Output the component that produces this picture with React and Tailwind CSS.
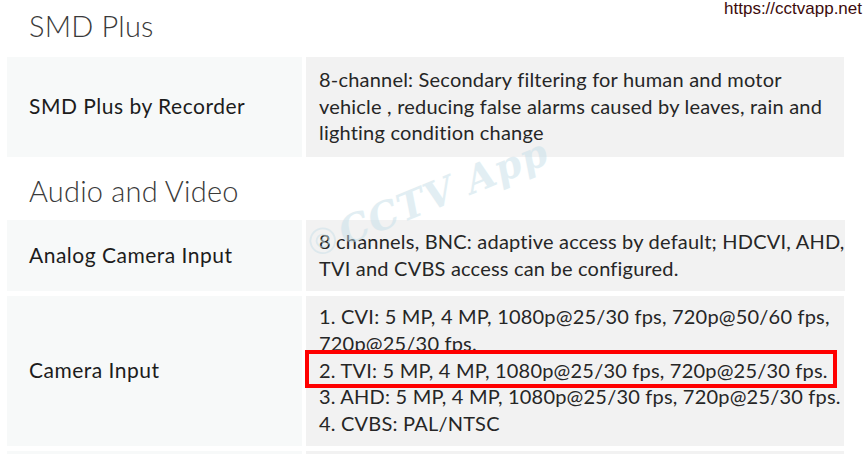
import React from 'react';

const specs = [
  {
    title: 'SMD Plus',
    rows: [
      {
        label: 'SMD Plus by Recorder',
        height: 'h-[100px]',
        lines: [
          '8-channel: Secondary filtering for human and motor',
          'vehicle , reducing false alarms caused by leaves, rain and',
          'lighting condition change',
        ],
      },
    ],
  },
  {
    title: 'Audio and Video',
    rows: [
      {
        label: 'Analog Camera Input',
        height: 'h-[71px]',
        lines: [
          '8 channels, BNC: adaptive access by default; HDCVI, AHD,',
          'TVI and CVBS access can be configured.',
        ],
      },
      {
        label: 'Camera Input',
        height: 'h-[150px]',
        lines: [
          '1. CVI: 5 MP, 4 MP, 1080p@25/30 fps, 720p@50/60 fps,',
          '720p@25/30 fps.',
          '2. TVI: 5 MP, 4 MP, 1080p@25/30 fps, 720p@25/30 fps.',
          '3. AHD: 5 MP, 4 MP, 1080p@25/30 fps, 720p@25/30 fps.',
          '4. CVBS: PAL/NTSC',
        ],
      },
      // next row only peeks in at the bottom edge
      { label: '', height: 'h-[40px]', lines: [] },
    ],
  },
];

function SpecRow({ row }) {
  return (
    <div className={`flex gap-[4px] ${row.height}`}>
      <div className="w-[295px] shrink-0 bg-[#f7f9f9] flex items-center pl-[22px] pb-[2px]">
        <span className="whitespace-nowrap text-[21px] tracking-[0.5px] text-[#1c1c1c]">{row.label}</span>
      </div>
      <div className="flex-1 bg-[#f2f2f2] flex items-center pl-[13px] pb-[2px]">
        <div className="leading-[26.7px] tracking-[0.2px]">
          {row.lines.map((line, i) => (
            <div key={i} className="whitespace-nowrap">
              {line}
            </div>
          ))}
        </div>
      </div>
    </div>
  );
}

export default function App() {
  return (
    <div className="relative w-[865px] h-[454px] overflow-hidden bg-white text-[20px] text-[#262626] font-['Lato','Open_Sans',sans-serif]">
      {/* site stamp */}
      <div className="absolute top-[-1px] right-[3px] text-[17px] leading-[19px] text-[#3d0b0b] font-['Liberation_Sans',Arial,sans-serif] bg-white">
        https://cctvapp.net
      </div>

      <div className="pl-[7px] pr-[21px]">
        {specs.map((sec, si) => (
          <section key={sec.title}>
            <h2
              className={`pl-[22px] text-[29px] leading-[34px] tracking-[0.2px] font-light text-[#3a3a3a] ${
                si === 0 ? 'pt-[9px] h-[57px]' : 'pt-[17px] h-[63px]'
              }`}
            >
              {sec.title}
            </h2>
            <div className="flex flex-col gap-[5px]">
              {sec.rows.map((row, ri) => (
                <SpecRow key={ri} row={row} />
              ))}
            </div>
          </section>
        ))}
      </div>

      {/* watermark */}
      <div className="absolute left-[316px] top-[226px] flex items-center gap-[4px] -rotate-[22deg] origin-bottom-left opacity-50 pointer-events-none">
        <svg width="30" height="30" viewBox="0 0 34 34" fill="none">
          <circle cx="17" cy="17" r="14" stroke="#c9e0e9" strokeWidth="2" />
          <circle cx="17" cy="17" r="7" stroke="#c9e0e9" strokeWidth="2" />
          <circle cx="17" cy="17" r="2.5" fill="#c9e0e9" />
        </svg>
        <span className="text-[38px] leading-none italic font-bold tracking-[1px] text-[#c6dfe9] font-['DejaVu_Serif',serif]">
          CCTV App
        </span>
      </div>

      {/* highlight box */}
      <div className="absolute left-[305px] top-[350px] w-[532px] h-[38px] border-[4px] border-[#ff0000]" />
    </div>
  );
}
